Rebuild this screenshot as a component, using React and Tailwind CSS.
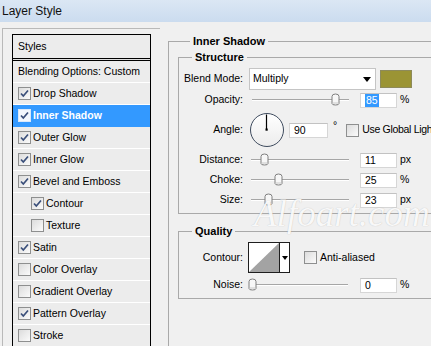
import React from "react";

const F = { fontFamily: '"Liberation Sans", Arial, sans-serif' };

function Check({ checked, selected }) {
  return (
    <div
      className={
        "w-[13px] h-[13px] shrink-0 border flex items-center justify-center " +
        (selected
          ? "border-[#d9e8fb] bg-[#f4f8fd]"
          : "border-[#8e8f8f] bg-gradient-to-br from-[#dcdcdc] to-[#fbfbfb]")
      }
    >
      {checked && (
        <svg width="11" height="11" viewBox="0 0 11 11">
          <path d="M2 5.5 L4.3 8 L9 2.5" fill="none" stroke="#3a4f7a" strokeWidth="1.7" />
        </svg>
      )}
    </div>
  );
}

function Row({ label, checked, indent, selected }) {
  return (
    <div
      className={
        "h-[22px] flex items-center gap-[2px] border-b " +
        (indent ? "pl-[18px] " : "pl-[5px] ") +
        (selected ? "bg-[#3399ff] border-[#3399ff] text-white font-bold" : "bg-[#ececec] border-white text-black")
      }
    >
      <Check checked={checked} selected={selected} />
      <span className="leading-none">{label}</span>
    </div>
  );
}

function Thumb() {
  return (
    <svg width="9" height="13" viewBox="0 0 9 13">
      <path
        d="M1 3.5 Q1 1 4.5 1 Q8 1 8 3.5 L8 10.5 Q8 12 4.5 12 Q1 12 1 10.5 Z"
        fill="#f7f7f7"
        stroke="#7f7f7f"
      />
      <path d="M2 10 L7 10" stroke="#c9c9c9" />
    </svg>
  );
}

function Slider({ pos, start = 0 }) {
  return (
    <div className="relative w-[100px] h-[14px] shrink-0">
      <div
        className="absolute top-[6px] right-0 h-[2px] border-t border-[#a6a6a6] border-b-white border-b bg-[#e2e2e2]"
        style={{ left: start }}
      />
      <div className="absolute top-0" style={{ left: pos }}>
        <Thumb />
      </div>
    </div>
  );
}

function Input({ value, w = "w-[37px]", highlight }) {
  return (
    <div className={"h-[15px] bg-white border border-[#d6d6d6] border-t-[#c2c2c2] flex items-center pl-[4px] shrink-0 " + w}>
      {highlight ? (
        <span className="bg-[#3399ff] text-white leading-[13px] px-[1px]">{value}</span>
      ) : (
        <span className="leading-none">{value}</span>
      )}
    </div>
  );
}

function Label({ children }) {
  return <div className="w-[65px] shrink-0 text-right pr-[1px]">{children}</div>;
}

function SliderRow({ label, pos, value, unit, start }) {
  return (
    <div className="h-[20px] flex items-center">
      <Label>{label}</Label>
      <div className="ml-[5px]">
        <Slider pos={pos} start={start} />
      </div>
      <div className="ml-[11px]">
        <Input value={value} />
      </div>
      <span className="ml-[3px]">{unit}</span>
    </div>
  );
}

export default function App() {
  return (
    <div className="w-[431px] h-[346px] overflow-hidden bg-[#f0f0f0] relative text-[10.5px] text-black" style={F}>
      {/* title bar */}
      <div className="h-[22px] bg-gradient-to-b from-[#dbe7f4] to-[#cbdcef] flex items-center pl-[2px]">
        <span className="text-[12px] text-[#111]">Layer Style</span>
      </div>

      <div className="flex">
        {/* left column */}
        <div className="w-[168px] shrink-0 pl-[2px] pt-[6px]">
          <div className="border-l border-t border-[#b9b9b9] pl-[9px] pt-[5px] w-[158px] h-[330px]">
            <div className="w-[139px] border-x border-t border-black h-[330px]">
              <div className="h-[24px] flex items-center pl-[5px] bg-[#ececec] border-b border-black">Styles</div>
              <div className="h-[1px] bg-[#e0e0e0]" />
              <div className="border-t border-black">
                <div className="h-[22px] flex items-center pl-[5px] bg-[#ececec] border-b border-white">
                  Blending Options: Custom
                </div>
                <Row label="Drop Shadow" checked />
                <Row label="Inner Shadow" checked selected />
                <Row label="Outer Glow" checked />
                <Row label="Inner Glow" checked />
                <Row label="Bevel and Emboss" checked />
                <Row label="Contour" checked indent />
                <Row label="Texture" indent />
                <Row label="Satin" checked />
                <Row label="Color Overlay" />
                <Row label="Gradient Overlay" />
                <Row label="Pattern Overlay" checked />
                <Row label="Stroke" />
              </div>
            </div>
          </div>
        </div>

        {/* right column */}
        <div className="pt-[13px] w-[300px] shrink-0">
          <fieldset className="border-l border-t border-[#a9a9a9] pl-[9px] pt-[3px] h-[330px] min-w-0">
            <legend className="ml-[12px] px-[3px] font-bold text-[11px] leading-[13px]">Inner Shadow</legend>

            <fieldset className="border-l border-t border-b border-[#a9a9a9] pb-[3px] min-w-0">
              <legend className="ml-[13px] px-[3px] font-bold text-[11px] leading-[13px]">Structure</legend>

              <div className="mt-[4px] h-[22px] flex items-center">
                <Label>Blend Mode:</Label>
                <div className="ml-[5px] w-[127px] h-[22px] bg-white border border-[#c5c5c5] flex items-center justify-between pl-[3px] pr-[4px]">
                  <span>Multiply</span>
                  <svg width="8" height="5" viewBox="0 0 8 5">
                    <path d="M0 0 L8 0 L4 5 Z" fill="#000" />
                  </svg>
                </div>
                <div className="ml-[4px] w-[32px] h-[18px] bg-[#9b9434] border border-[#8d8a5a]" />
              </div>

              <div className="h-[20px] flex items-center">
                <Label>Opacity:</Label>
                <div className="ml-[5px]">
                  <Slider pos={82} start={3} />
                </div>
                <div className="ml-[11px]">
                  <Input value="85" highlight />
                </div>
                <span className="ml-[3px]">%</span>
              </div>

              <div className="h-[40px] flex items-center">
                <Label>Angle:</Label>
                <div className="ml-[6px] w-[34px] h-[34px] rounded-full border-[1.5px] border-[#3e4b5e] bg-gradient-to-b from-white to-[#ececec] shrink-0">
                  <svg width="31" height="31" viewBox="0 0 31 31">
                    <line x1="15.5" y1="0.5" x2="15.5" y2="15.5" stroke="#000" strokeWidth="1.2" />
                    <rect x="14.5" y="14.5" width="2.2" height="2.2" fill="#000" />
                  </svg>
                </div>
                <div className="ml-[5px]">
                  <Input value="90" w="w-[39px]" />
                </div>
                <span className="ml-[5px] -mt-[8px]">°</span>
                <div className="ml-[9px]">
                  <Check />
                </div>
                <span className="ml-[3px] whitespace-nowrap tracking-[-0.3px]">Use Global Light</span>
              </div>

              <SliderRow label="Distance:" pos={11} value="11" unit="px" start={2} />
              <SliderRow label="Choke:" pos={25} value="25" unit="%" start={2} />
              <SliderRow label="Size:" pos={15} value="23" unit="px" start={2} />
            </fieldset>

            <fieldset className="mt-[11px] border-l border-t border-b border-[#a9a9a9] pb-[1px] min-w-0">
              <legend className="ml-[13px] px-[3px] font-bold text-[11px] leading-[13px]">Quality</legend>
              <div className="mt-[4px] h-[31px] flex items-center">
                <Label>Contour:</Label>
                <div className="ml-[4px] h-[31px] w-[42px] border border-[#1e1e1e] flex bg-white">
                  <svg width="30" height="29" viewBox="0 0 30 29" className="shrink-0">
                    <path d="M0 29 L30 0 L30 29 Z" fill="#a3a3a3" />
                  </svg>
                  <div className="flex-1 border-l border-[#1e1e1e] flex items-center justify-center">
                    <svg width="6" height="4" viewBox="0 0 6 4">
                      <path d="M0 0 L6 0 L3 4 Z" fill="#000" />
                    </svg>
                  </div>
                </div>
                <div className="ml-[14px]">
                  <Check />
                </div>
                <span className="ml-[3px]">Anti-aliased</span>
              </div>
              <div className="h-[24px] flex items-center">
                <Label>Noise:</Label>
                <div className="ml-[4px]">
                  <Slider pos={0} start={3} />
                </div>
                <div className="ml-[12px]">
                  <Input value="0" />
                </div>
                <span className="ml-[3px]">%</span>
              </div>
            </fieldset>
          </fieldset>
        </div>
      </div>

      {/* watermark */}
      <div
        className="absolute left-[254px] top-[186px] text-[37px] italic text-white/90 pointer-events-none whitespace-nowrap"
        style={{ fontFamily: '"Liberation Serif", serif', textShadow: "0 0 1px rgba(0,0,0,0.25)" }}
      >
        Alfoart.com
      </div>
    </div>
  );
}
